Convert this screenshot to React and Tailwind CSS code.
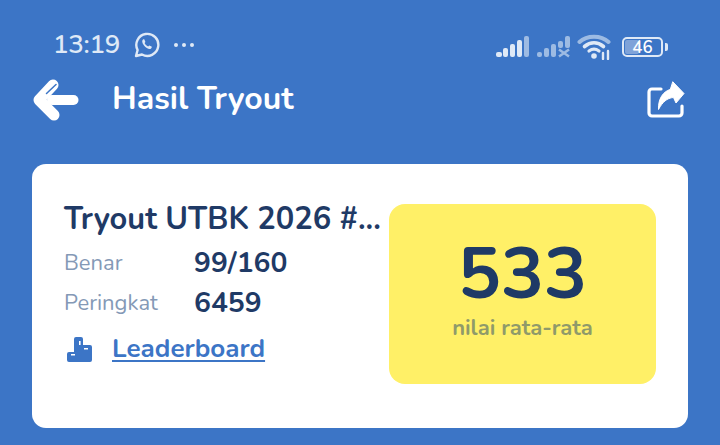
export default function App() {
  return (
    <div className="w-[720px] h-[445px] overflow-hidden bg-[#3c75c6] font-['Nunito','Lato','Noto_Sans',sans-serif] flex flex-col">
      <div className="h-[72px] flex items-end justify-between pl-[53px] pr-[52px] pb-[12px] text-[#dfe9f6]">
        <div className="flex items-center gap-[14px]">
          <span className="text-[26px] leading-[30px] font-semibold tracking-[-0.3px]">13:19</span>
          <svg className="mt-[-1px]" width="26" height="26" viewBox="0 0 26 26" fill="none" stroke="currentColor" strokeWidth="2.4">
            <path d="M2 24l1.600-6A11 11 0 1 1 8 22.500z" strokeLinejoin="round" />
            <path d="M9 7.500c-1.200 1-1.200 3.200 1 6s5.200 4.200 6.800 3.200c1.100-.7 1.100-1.800.8-2.200l-2.400-1.100-1 1.100c-1-.3-3-2.100-3.600-3.600l.8-1-1-2.400c-.5-.2-1.100-.2-1.400 0z" fill="currentColor" stroke="none" />
          </svg>
          <svg width="20" height="4" viewBox="0 0 20 4" fill="currentColor">
            <circle cx="2" cy="2" r="2" /><circle cx="10" cy="2" r="2" /><circle cx="18" cy="2" r="2" />
          </svg>
        </div>
        <div className="flex items-center gap-[6px]">
          <svg width="33" height="24" viewBox="0 0 33 24" fill="#dfe9f6">
            <rect x="0" y="17" width="6" height="5" rx="2" /><rect x="7" y="13" width="5" height="9" rx="2" /><rect x="14" y="9" width="5" height="13" rx="2" /><rect x="21" y="5" width="5" height="17" rx="2" /><rect x="28" y="1" width="5" height="21" rx="2" opacity=".6" />
          </svg>
          <svg className="ml-[2px]" width="34" height="24" viewBox="0 0 34 24" fill="#9dbbe3">
            <rect x="0" y="17" width="5" height="5" rx="2" /><rect x="7" y="13" width="5" height="9" rx="2" /><rect x="14" y="9" width="5" height="13" rx="2" /><rect x="21" y="6" width="5" height="7" rx="2" /><rect x="28" y="1" width="5" height="12" rx="2" />
            <path d="M22 14.500l10 7M32 14.500l-10 7" stroke="#9dbbe3" strokeWidth="2.500" />
          </svg>
          <svg className="ml-[0px]" width="34" height="26" viewBox="0 0 34 26" fill="none" stroke="#dfe9f6" strokeLinecap="round">
            <path d="M2.500 8C10 1 24 1 31.500 8" stroke="#9dbbe3" strokeWidth="4" />
            <path d="M7.500 12.500c6-5 13-5 19 0" strokeWidth="3.600" />
            <path d="M12 17c3.500-2.500 6.500-2.500 10 0" strokeWidth="3.200" />
            <circle cx="17" cy="22" r="2.800" fill="#dfe9f6" stroke="none" />
            <path d="M26 19v6M31 17v8" strokeWidth="2.400" />
          </svg>
          <div className="ml-[5px] flex items-center gap-[2px]">
            <div className="relative w-[41px] h-[20px] rounded-[5px] border-2 border-[#dfe9f6] flex items-center justify-center">
              <div className="absolute left-[1px] top-[1px] bottom-[1px] w-[14px] bg-[#7fa3d9] rounded-[2px]" />
              <span className="relative text-[17px] leading-none font-semibold text-white">46</span>
            </div>
            <div className="w-[3px] h-[8px] bg-[#dfe9f6] rounded-r-[2px]" />
          </div>
        </div>
      </div>

      <div className="h-[54px] flex items-center justify-between pl-[32px] pr-[35px]">
        <div className="flex items-center gap-[32px]">
          <svg width="48" height="44" viewBox="0 0 48 44" fill="none" stroke="#ffffff" strokeLinecap="round" strokeLinejoin="round">
            <path d="M20 23H41.500" strokeWidth="10" />
            <path d="M21 8L7 23L22 38" strokeWidth="11" />
            <path d="M14.500 16.500L24 7.500" stroke="#3c75c6" strokeWidth="1.500" />
          </svg>
          <span className="text-[32px] leading-[40px] font-bold text-white">Hasil Tryout</span>
        </div>
        <svg width="38" height="38" viewBox="0 0 38 38" fill="none" stroke="#ffffff" strokeLinejoin="round" strokeLinecap="round">
          <path d="M14 9H5a3 3 0 0 0-3 3v21a3 3 0 0 0 3 3h27a3 3 0 0 0 3-3V26" strokeWidth="3.200" />
          <path d="M26 2L37 13.500L29 23L26.500 17.500C20 18 15.500 22 11.500 29.500C11 19 16 11.500 23 9.500z" fill="#ffffff" strokeWidth="1" />
        </svg>
      </div>

      <div className="mt-[38px] mx-[32px] h-[264px] rounded-[14px] bg-white pl-[32px] pr-[32px] py-[40px] flex items-start justify-between">
        <div className="w-[320px] flex flex-col">
          <div className="text-[30.8px] leading-[30px] font-bold text-[#1f3a66] whitespace-nowrap">Tryout UTBK 2026 #...</div>
          <div className="mt-[9px] flex items-center h-[40px]">
            <span className="w-[130px] text-[22px] text-[#8499b6]">Benar</span>
            <span className="text-[28.2px] font-bold text-[#1f3a66]">99/160</span>
          </div>
          <div className="flex items-center h-[40px]">
            <span className="w-[130px] text-[22px] text-[#8499b6]">Peringkat</span>
            <span className="text-[28.2px] font-bold text-[#1f3a66]">6459</span>
          </div>
          <div className="mt-[10px] flex items-center gap-[20px] pl-[3px]">
            <svg width="25" height="25" viewBox="0 0 25 25" fill="#3c75c6">
              <path d="M7 2a2 2 0 0 1 2-2h5a2 2 0 0 1 2 2v6h7a2 2 0 0 1 2 2v13a2 2 0 0 1-2 2H2a2 2 0 0 1-2-2v-6a2 2 0 0 1 2-2h5z" />
              <path d="M12 4h1.600v4H12zM17 11h4v1.600h-4zM4 17h4v1.600H4z" fill="#ffffff" />
            </svg>
            <span className="text-[26px] leading-[32px] font-bold text-[#3c75c6] underline underline-offset-[3px]">Leaderboard</span>
          </div>
        </div>
        <div className="w-[267px] h-[180px] rounded-[16px] bg-[#fff067] flex flex-col items-center justify-start pt-[36px]">
          <span className="text-[72px] leading-[68px] font-bold text-[#1f3a66]">533</span>
          <span className="text-[22px] leading-[26px] mt-[7px] font-bold text-[#8f9a6a]">nilai rata-rata</span>
        </div>
      </div>
    </div>
  );
}
